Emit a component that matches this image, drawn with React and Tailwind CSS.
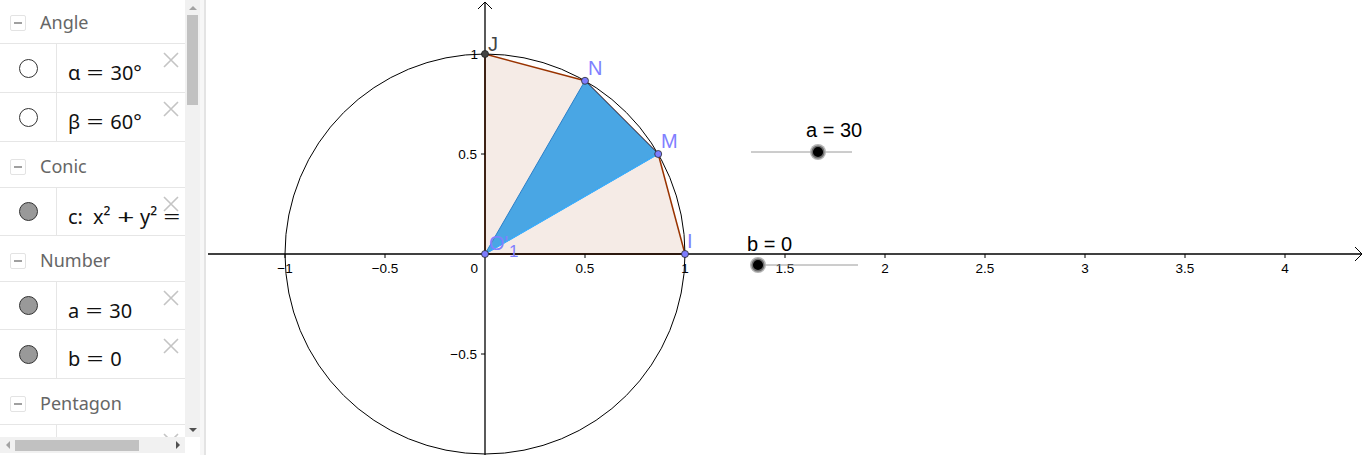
import React from 'react';

const PANEL_FONT = { fontFamily: '"Noto Sans", "DejaVu Sans", sans-serif' };

function Op({ children, wide }) {
  return (
    <span className={`inline-block w-[16px] ${wide ? 'mx-[9px]' : 'mx-[7px]'} text-center scale-x-150`}>
      {children}
    </span>
  );
}

function MinusBox() {
  return (
    <div className="w-[16px] h-[16px] border border-[#e3e3e3] rounded-[2px] flex items-center justify-center">
      <div className="w-[8px] h-[1.5px] bg-[#a0a0a0]" />
    </div>
  );
}

function CloseIcon() {
  return (
    <svg width="16" height="16" viewBox="0 0 16 16" className="absolute right-[6px] top-[8px]">
      <path d="M1 1 L15 15 M15 1 L1 15" stroke="#c4c4c4" strokeWidth="1.6" fill="none" />
    </svg>
  );
}

function Header({ label, h = 'h-[46px]' }) {
  return (
    <div className={`${h} flex items-center gap-[14px] pl-[10px] pt-[5px] border-b border-[#e6e6e6] shrink-0`}>
      <MinusBox />
      <span className="text-[18px] text-[#666666] -mt-[2px]">{label}</span>
    </div>
  );
}

function Item({ children, filled, h = 'h-[49px]', marker = '#999999' }) {
  return (
    <div className={`${h} relative flex border-b border-[#e6e6e6] shrink-0`}>
      <div className="w-[57px] flex items-center justify-center border-r border-[#e6e6e6]">
        <div
          className={`w-[19px] h-[19px] rounded-full border border-[#333333] ${filled ? '' : 'bg-white'}`}
          style={filled ? { backgroundColor: marker } : undefined}
        />
      </div>
      <div className="flex-1 flex items-center pl-[11px] pt-[10px] overflow-hidden whitespace-nowrap text-[20px] text-[#111111]">
        {children}
      </div>
      <CloseIcon />
    </div>
  );
}

function AlgebraPanel() {
  return (
    <div className="w-[200px] h-[455px] flex flex-col shrink-0 bg-white" style={PANEL_FONT}>
      <div className="flex h-[437px]">
        <div className="w-[185px] overflow-hidden">
          <div className="-mt-[2px] flex flex-col">
            <Header label="Angle" />
            <Item>
              α<Op>=</Op>30°
            </Item>
            <Item>
              β<Op>=</Op>60°
            </Item>
            <Header label="Conic" />
            <Item filled h="h-[48px]">
              c:<span className="ml-[10px]">x²</span>
              <Op wide>+</Op>y²<Op wide>=</Op>1
            </Item>
            <Header label="Number" />
            <Item filled h="h-[48px]">
              a<Op>=</Op>30
            </Item>
            <Item filled>
              b<Op>=</Op>0
            </Item>
            <Header label="Pentagon" />
            <Item filled marker="#a0522d" />
          </div>
        </div>
        {/* vertical scrollbar */}
        <div className="w-[15px] bg-[#f1f1f1] flex flex-col items-center">
          <div className="h-[15px] flex items-center justify-center">
            <div className="w-0 h-0 border-l-[4px] border-r-[4px] border-b-[4px] border-l-transparent border-r-transparent border-b-[#a3a3a3]" />
          </div>
          <div className="w-[11px] h-[90px] bg-[#c1c1c1]" />
          <div className="flex-1" />
          <div className="h-[15px] flex items-center justify-center">
            <div className="w-0 h-0 border-l-[4px] border-r-[4px] border-t-[4px] border-l-transparent border-r-transparent border-t-[#505050]" />
          </div>
        </div>
      </div>
      <div className="flex h-[18px]">
        <div className="w-[185px] h-[16px] bg-[#f1f1f1] flex items-center">
          <div className="w-[15px] flex items-center justify-center">
            <div className="w-0 h-0 border-t-[4px] border-b-[4px] border-r-[4px] border-t-transparent border-b-transparent border-r-[#a3a3a3]" />
          </div>
          <div className="w-[124px] h-[11px] bg-[#c1c1c1]" />
          <div className="flex-1" />
          <div className="w-[15px] flex items-center justify-center">
            <div className="w-0 h-0 border-t-[4px] border-b-[4px] border-l-[4px] border-t-transparent border-b-transparent border-l-[#505050]" />
          </div>
        </div>
        <div className="w-[15px] bg-white" />
      </div>
    </div>
  );
}

const OX = 485;
const OY = 254;
const U = 200;
const px = (x) => OX + x * U;
const py = (y) => OY - y * U;

function Graphics() {
  const I = [px(1), py(0)];
  const M = [px(Math.cos(Math.PI / 6)), py(0.5)];
  const N = [px(0.5), py(Math.sin(Math.PI / 3))];
  const J = [px(0), py(1)];
  const O = [OX, OY];
  const pts = (arr) => arr.map((p) => p.join(',')).join(' ');

  const xTicks = [-1, -0.5, 0.5, 1, 1.5, 2, 2.5, 3, 3.5, 4];
  const fmt = (v) => (v < 0 ? '−' + String(-v) : String(v));

  return (
    <svg width="1158" height="455" viewBox="208 0 1158 455" className="block">
      <rect x="208" y="0" width="1158" height="455" fill="#ffffff" />
      {/* pentagon */}
      <polygon points={pts([O, I, M, N, J])} fill="#f5ebe6" stroke="#993300" strokeWidth="1.5" strokeLinejoin="round" />
      {/* triangle */}
      <polygon points={pts([O, M, N])} fill="#49a6e4" stroke="#2a7fc8" strokeWidth="1" />
      <line x1={O[0]} y1={O[1]} x2={M[0]} y2={M[1]} stroke="#3cb0ff" strokeWidth="1.2" />
      <line x1={N[0]} y1={N[1]} x2={M[0]} y2={M[1]} stroke="#3a5f86" strokeWidth="1" />
      {/* circle */}
      <circle cx={OX} cy={OY} r={U} fill="none" stroke="#000000" strokeWidth="1" />
      {/* axes */}
      <line x1="208" y1={OY} x2="1362" y2={OY} stroke="#000" strokeWidth="1.3" />
      <path d="M1355 247 L1362 254 L1355 261" fill="none" stroke="#000" strokeWidth="1" />
      <line x1={OX} y1="455" x2={OX} y2="2" stroke="#000" strokeWidth="1.3" />
      <path d="M478 9 L485 2 L492 9" fill="none" stroke="#000" strokeWidth="1" />
      {xTicks.map((v) => (
        <line key={'t' + v} x1={px(v)} y1={OY} x2={px(v)} y2={OY + 4} stroke="#000" strokeWidth="1" />
      ))}
      {[1, 0.5, -0.5].map((v) => (
        <line key={'ty' + v} x1={OX - 4} y1={py(v)} x2={OX} y2={py(v)} stroke="#000" strokeWidth="1" />
      ))}
      <g fontFamily='"Liberation Sans", Arial, sans-serif' fontSize="13.5" fill="#000">
        {xTicks.map((v) => (
          <text key={'l' + v} x={px(v)} y="273" textAnchor="middle">
            {fmt(v)}
          </text>
        ))}
        <text x="478" y="273" textAnchor="end">0</text>
        <text x="478" y="59" textAnchor="end">1</text>
        <text x="477" y="159" textAnchor="end">0.5</text>
        <text x="477" y="359" textAnchor="end">−0.5</text>
      </g>
      {/* points */}
      {[O, I, M, N].map((p, i) => (
        <circle key={'p' + i} cx={p[0]} cy={p[1]} r="3.5" fill="#7d7dff" stroke="#2b2b2b" strokeWidth="0.8" />
      ))}
      <circle cx={J[0]} cy={J[1]} r="3.5" fill="#444444" stroke="#222" strokeWidth="0.8" />
      <g fontFamily='"Liberation Sans", Arial, sans-serif' fontSize="20">
        <text x="588" y="75" fill="#8080ff">N</text>
        <text x="661" y="148" fill="#8080ff">M</text>
        <text x="687" y="248" fill="#8080ff">I</text>
        <text x="488" y="51" fill="#444444">J</text>
        <text x="489" y="250" fill="#8080ff">O'</text>
        <text x="509" y="257" fill="#8080ff" fontSize="17">1</text>
      </g>
      {/* sliders */}
      <line x1="751" y1="152" x2="852" y2="152" stroke="#9a9a9a" strokeWidth="1" />
      <circle cx="818" cy="152" r="8" fill="#b5b5b5" />
      <circle cx="818" cy="152" r="5.8" fill="#000" stroke="#6e6e6e" strokeWidth="1.5" />
      <line x1="758" y1="265" x2="858" y2="265" stroke="#9a9a9a" strokeWidth="1" />
      <circle cx="758" cy="265" r="8" fill="#b5b5b5" />
      <circle cx="758" cy="265" r="5.8" fill="#000" stroke="#6e6e6e" strokeWidth="1.5" />
      <g fontFamily='"Liberation Sans", Arial, sans-serif' fontSize="20" fill="#000">
        <text x="806" y="137">a = 30</text>
        <text x="747" y="251">b = 0</text>
      </g>
    </svg>
  );
}

export default function App() {
  return (
    <div className="w-[1366px] h-[455px] flex overflow-hidden bg-white">
      <AlgebraPanel />
      <div className="w-[8px] h-full flex shrink-0">
        <div className="w-[4px] bg-[#f7f7f7]" />
        <div className="w-[2px] bg-[#e4e4e4]" />
        <div className="w-[2px] bg-white" />
      </div>
      <Graphics />
    </div>
  );
}
